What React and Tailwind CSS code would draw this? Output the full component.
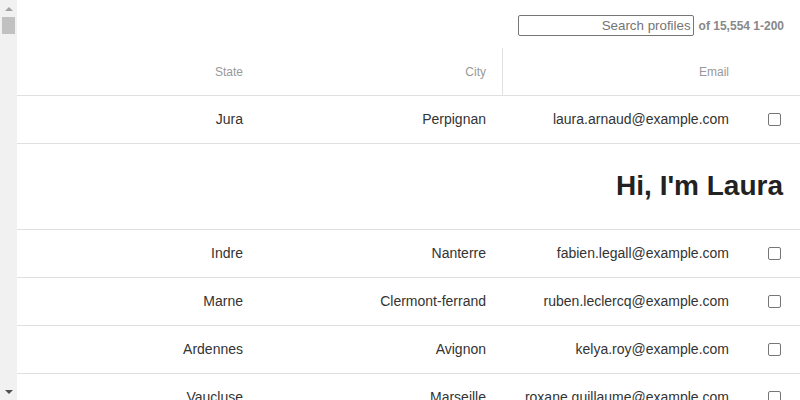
import React from "react";

const rows = [
  ["Jura", "Perpignan", "laura.arnaud@example.com"],
  null,
  ["Indre", "Nanterre", "fabien.legall@example.com"],
  ["Marne", "Clermont-ferrand", "ruben.leclercq@example.com"],
  ["Ardennes", "Avignon", "kelya.roy@example.com"],
  ["Vaucluse", "Marseille", "roxane.guillaume@example.com"],
];

function Check() {
  return (
    <div className="w-[55px] flex items-center">
      <div className="ml-[23px] w-[13px] h-[13px] border border-[#767676] rounded-[2px] bg-white" />
    </div>
  );
}

export default function App() {
  return (
    <div
      className="flex h-[400px] w-[800px] overflow-hidden bg-white"
      style={{ fontFamily: '"Liberation Sans", Arial, sans-serif' }}
    >
      {/* scrollbar */}
      <div className="w-[17px] shrink-0 bg-[#f1f1f1] flex flex-col items-center">
        <div className="h-[17px] flex items-center justify-center">
          <div className="w-0 h-0 border-l-[4px] border-r-[4px] border-b-[4px] border-l-transparent border-r-transparent border-b-[#a3a3a3]" />
        </div>
        <div className="w-[13px] h-[17px] bg-[#c1c1c1]" />
        <div className="flex-1" />
        <div className="h-[17px] flex items-center justify-center">
          <div className="w-0 h-0 border-l-[4px] border-r-[4px] border-t-[4px] border-l-transparent border-r-transparent border-t-[#505050]" />
        </div>
      </div>

      <div className="flex-1 flex flex-col">
        {/* top bar */}
        <div className="h-[48px] flex justify-end items-start pt-[15px] pr-[16px] shrink-0">
          <div className="w-[176px] h-[21px] border border-[#767676] rounded-[2px] flex items-center justify-end pr-[2px] text-[13.33px] text-[#757575]">
            Search profiles
          </div>
          <div className="ml-[5px] h-[21px] flex items-center text-[12px] font-bold text-[#888]">
            of 15,554 1-200
          </div>
        </div>

        {/* header */}
        <div className="h-[48px] flex border-b border-[#e0e0e0] shrink-0 text-[12px] text-[#999]">
          <div className="w-[242px] flex items-center justify-end pr-[16px]">State</div>
          <div className="w-[243px] flex items-center justify-end pr-[16px]">City</div>
          <div className="w-[243px] flex items-center justify-end pr-[16px] border-l border-[#e0e0e0]">Email</div>
          <div className="w-[55px]" />
        </div>

        {rows.map((r, i) =>
          r ? (
            <div key={i} className="h-[48px] flex border-b border-[#e0e0e0] shrink-0 text-[14px] text-[#333]">
              <div className="w-[242px] flex items-center justify-end pr-[16px]">{r[0]}</div>
              <div className="w-[243px] flex items-center justify-end pr-[16px]">{r[1]}</div>
              <div className="w-[243px] flex items-center justify-end pr-[16px]">{r[2]}</div>
              <Check />
            </div>
          ) : (
            <div key={i} className="h-[86px] flex items-center justify-end pr-[17px] pb-[2px] border-b border-[#e0e0e0] shrink-0">
              <h1 className="text-[28px] font-bold text-[#222]">Hi, I'm Laura</h1>
            </div>
          )
        )}
      </div>
    </div>
  );
}
